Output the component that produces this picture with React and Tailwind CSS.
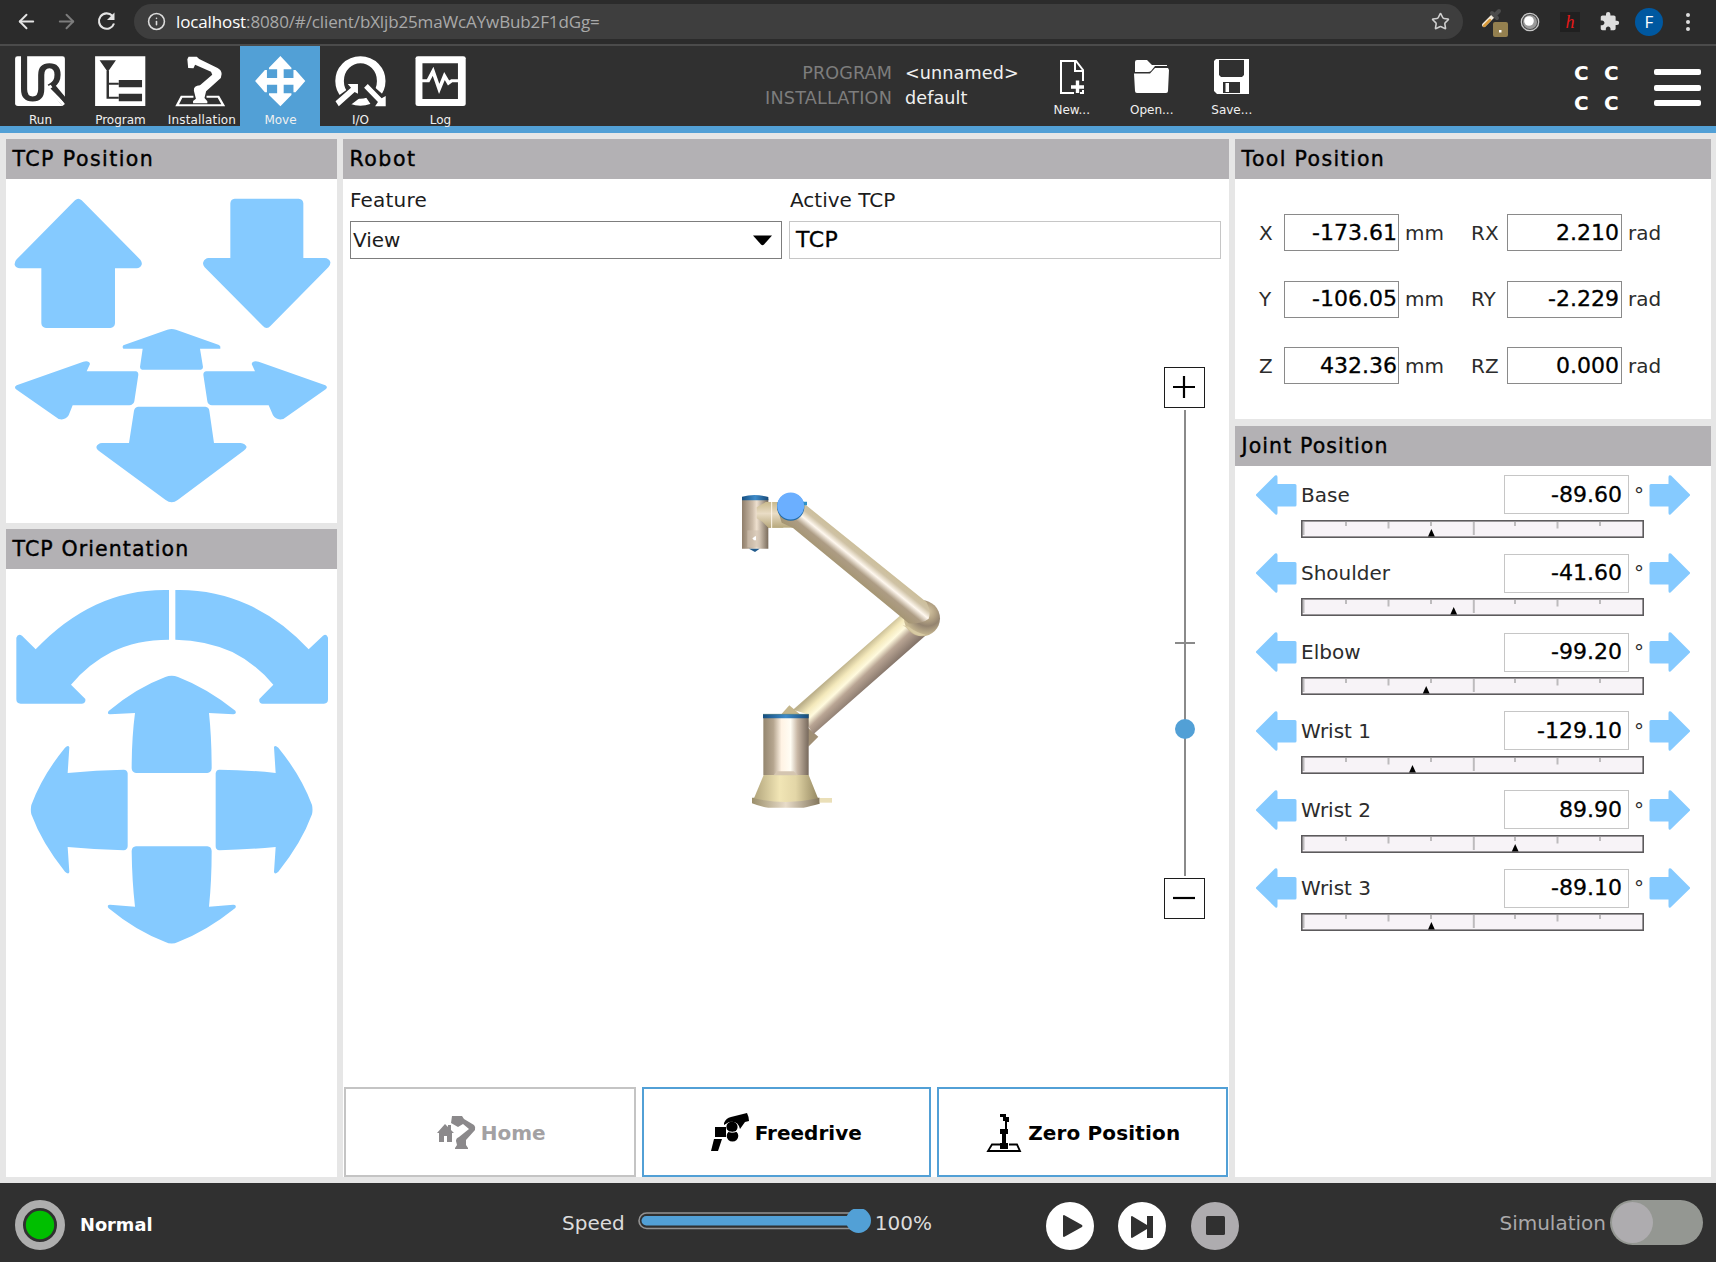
import React from "react";
import { ArrowLeft, ArrowRight, Info, Star } from "lucide-react";
import { MdExtension } from "react-icons/md";

const BLUE = "#85caff";

/* Toolbar icons: artwork units are 2.45 per pixel across and 3 per pixel down. */
function Art({ x, y, w, h, children }) {
  return (
    <svg width={w} height={h} viewBox={`${x} ${y} ${w} ${h}`} className="block shrink-0">
      <g transform="scale(0.40816 0.33333)">{children}</g>
    </svg>
  );
}

const RunIcon = () => (
  <Art x={15} y={56} w={51} h={51}>
    <path d="M43 169 H153 Q159 169 159 176 V318 H44 Q37 318 37 310 V176 Q37 169 43 169Z" fill="#fff" />
    <path d="M59 166 V268 Q59 297 80 297 Q101 297 101 268 V225 Q101 197 121 197 Q141 197 141 224 Q141 246 127 256 L161 306" fill="none" stroke="#303030" strokeWidth="15" />
    <path d="M122 270 L153 318 H163 V298 L147 276Z" fill="#303030" />
    <path d="M124 254 L159 312 L153 318 L113 262Z" fill="#fff" />
    <path d="M128 262 L160 302" stroke="#303030" strokeWidth="11" />
  </Art>
);
const ProgramIcon = () => (
  <Art x={95} y={56} w={51} h={51}>
    <path d="M233 169 H356 V318 H233Z" fill="#fff" />
    <path d="M244 181 H284 L264 216Z M291 240 H348 V262 H291Z M291 281 H348 V304 H291Z" fill="#303030" />
    <path d="M264 212 V293 H291 M264 251 H291" fill="none" stroke="#303030" strokeWidth="6" />
  </Art>
);
const InstallIcon = () => (
  <Art x={175} y={56} w={51} h={51}>
    <path d="M474 290 H445 L434 316 H547 L535 290 H506" fill="none" stroke="#fff" strokeWidth="6" />
    <path d="M462 170 H482 L488 177 L533 204 Q543 210 543 222 L541 234 L505 274 L501 294 L508 304 V310 H473 V303 L480 296 L475 272 Q474 257 490 256 L520 224 L517 215 L478 194 L474 205 L461 204 L459 178Z" fill="#fff" />
  </Art>
);
const MoveIcon = () => (
  <Art x={255} y={56} w={51} h={51}>
    <path d="M687 168 L714 203 V208 H695 V234 H719 V210 H724 L748 243 L724 277 H719 V254 H695 V280 H714 V285 L687 319 L659 285 V280 H679 V254 H654 V277 H649 L625 243 L649 210 H654 V234 H679 V208 H659 V203Z" fill="#fff" />
  </Art>
);
const IOIcon = () => (
  <Art x={335} y={56} w={51} h={51}>
    <ellipse cx="883" cy="243" rx="51" ry="64" fill="none" stroke="#fff" strokeWidth="21" />
    <path d="M815 300 L853 266 L846 246 L880 246 L888 288 L848 325Z M880 262 L900 242 L953 300 V325 H915Z" fill="#303030" />
    <path d="M822 304 L860 263 L852 252 H877 V281 L869 276 L830 319Z M892 263 L901 252 L935 295 L945 288 V319 H919 L926 306Z" fill="#fff" />
  </Art>
);
const LogIcon = () => (
  <Art x={415} y={56} w={51} h={51}>
    <rect x="1018" y="169" width="123" height="149" rx="6" fill="#fff" />
    <path d="M1035 190 H1122 V297 H1035Z" fill="#303030" />
    <path d="M1031 242 H1049 L1061 214 L1076 267 L1089 228 L1099 249 L1107 242 H1124" fill="none" stroke="#fff" strokeWidth="9" />
  </Art>
);
const NewIcon = () => (
  <svg width="26" height="36" viewBox="0 0 26 36" fill="none" stroke="#fff" strokeWidth="2">
    <path d="M15 34 H2 V2 H17 L24 11 V22 M16 2 V12 H24 M24 31 V34 H21" />
    <path d="M18.5 21.5 V34 M12 28 H25" strokeWidth="3.4" />
  </svg>
);
const OpenIcon = () => (
  <svg width="36" height="36" viewBox="0 0 36 36" fill="#fff">
    <path d="M1 3 Q1 1 3 1 H13 L18 6 H33 V7 H21 L17 12 Q16 13 14 13 H1Z" />
    <path d="M0 14.5 H16 L21 9 H34 L35 11 L34 32 Q34 34 32 34 H3 Q1 34 1 32Z" />
  </svg>
);
const SaveIcon = () => (
  <svg width="36" height="36" viewBox="0 0 36 36">
    <path d="M2 0 H35 V35 H3 L0 32 V2Z" fill="#fff" />
    <path d="M5 1 H30 V16 L28 18 H7 L5 16Z M9 23 H26 V34 H9Z" fill="#303030" />
    <path d="M11.5 24 H15 V33 H11.5Z" fill="#fff" />
  </svg>
);

const tabs = [
  ["Run", RunIcon], ["Program", ProgramIcon], ["Installation", InstallIcon],
  ["Move", MoveIcon], ["I/O", IOIcon], ["Log", LogIcon],
];

function BrowserBar() {
  return (
    <div className="flex h-[46px] items-center border-b-2 border-[#4b4b4b] bg-[#2b2b2b] pb-px">
      <ArrowLeft className="ml-[15px] size-[23px] text-[#e4e4e4]" strokeWidth={2} />
      <ArrowRight className="ml-[17px] size-[23px] text-[#7c7c7c]" strokeWidth={2} />
      <svg className="ml-[18px] size-[21px]" viewBox="0 0 21 21" fill="none" stroke="#e4e4e4" strokeWidth="2.1">
        <path d="M16.3 4.8 A7.7 7.7 0 1 0 18 12.5" />
        <path d="M18.5 1.5 V9 H11Z" fill="#e4e4e4" stroke="none" />
      </svg>
      <div className="ml-[17px] flex h-[35px] w-[1329px] items-center rounded-full bg-[#3e3e3e] pr-[13px] pl-[13px]">
        <Info className="size-[19px] text-[#dcdcdc]" strokeWidth={2} />
        <span className="ml-[10px] font-['Open_Sans'] text-[17px] leading-none tracking-[-0.13px] whitespace-nowrap text-[#a9a9a9]">
          <span className="text-white">localhost</span>:8080/#/client/bXljb25maWcAYwBub2F1dGg=
        </span>
        <Star className="ml-auto size-[19px] text-[#cfcfcf]" strokeWidth={2} />
      </div>
      <svg className="ml-[18px] h-[30px] w-[28px]" viewBox="0 0 28 30">
        <path d="M3 18 L13 8" stroke="#f2e9d8" strokeWidth="4" strokeLinecap="round" />
        <path d="M3 19 L9 13" stroke="#d99a3a" strokeWidth="2.5" strokeLinecap="round" />
        <path d="M11 6 L16 11 M14 8 L18 4" stroke="#4c4c4c" strokeWidth="4" strokeLinecap="round" />
        <rect x="12" y="15" width="15" height="15" rx="2" fill="#94804f" />
        <rect x="18" y="23" width="2.5" height="2.5" fill="#fff" />
      </svg>
      <svg className="ml-[11px] size-[20px]" viewBox="0 0 20 20">
        <circle cx="10" cy="10" r="8.7" fill="#4a4a4a" stroke="#c8c8c8" strokeWidth="1.3" />
        <circle cx="10" cy="10" r="7" fill="#9a9a9a" />
        <circle cx="9" cy="9" r="4.8" fill="#fff" />
      </svg>
      <div className="ml-[20px] flex size-[20px] items-center justify-center bg-[#202020] font-['Liberation_Serif'] text-[18px] leading-none text-[#e81818] italic">h</div>
      <MdExtension className="ml-[19px] size-[21px] text-[#dedede]" />
      <div className="ml-[15px] flex size-7 items-center justify-center rounded-full bg-[#0058a0] font-['Open_Sans'] text-[17px] leading-none text-white">F</div>
      <div className="ml-[23px] flex flex-col gap-[3px]">
        {[0, 1, 2].map((i) => <div key={i} className="size-1 rounded-full bg-[#dedede]" />)}
      </div>
    </div>
  );
}

function FileButton({ icon: Icon, label }) {
  return (
    <div className="flex w-[80px] flex-col items-center pt-[13px] text-[12px] leading-none">
      <Icon />
      <span className="mt-[9px]">{label}</span>
    </div>
  );
}

function Header() {
  return (
    <div className="flex h-[87px] border-b-[7px] border-[#52a0d6] bg-[#303030] text-[#f0f0f0]">
      {tabs.map(([name, Icon]) => (
        <div key={name} className={"flex w-[80px] flex-col items-center pt-[10px] text-[12px] leading-none " + (name === "Move" ? "bg-[#52a0d6]" : "")}>
          <Icon />
          <span className={"mt-[7px] whitespace-nowrap " + (name === "Installation" ? "pl-[4px] tracking-[0.15px]" : "pl-[1px]")}>{name}</span>
        </div>
      ))}
      <div className="ml-[284px] grid h-[52px] grid-cols-[128px_auto] content-start gap-x-[13px] pt-[15px] text-[17.6px] leading-[25px] whitespace-nowrap">
        <span className="text-right tracking-[0.1px] text-[#7d7d7d]">PROGRAM</span><span className="tracking-[0.1px]">&lt;unnamed&gt;</span>
        <span className="text-right tracking-[0.2px] text-[#7d7d7d]">INSTALLATION</span><span className="tracking-[0.1px]">default</span>
      </div>
      <div className="ml-[13px] flex">
        <FileButton icon={NewIcon} label="New..." />
        <FileButton icon={OpenIcon} label="Open..." />
        <FileButton icon={SaveIcon} label="Save..." />
      </div>
      <div className="ml-auto grid h-[60px] grid-cols-[30px_30px] pt-[12px] text-[20px] leading-[30px] font-bold text-white">
        <span>C</span><span>C</span><span>C</span><span>C</span>
      </div>
      <div className="mt-[23px] mr-[15px] ml-[20px] flex flex-col gap-[9.500px]">
        {[0, 1, 2].map((i) => <div key={i} className="h-[6px] w-[47px] rounded-[2px] bg-white" />)}
      </div>
    </div>
  );
}

function Panel({ title, className, tracking = "tracking-[1.1px]", children }) {
  return (
    <section className={"flex flex-col bg-white " + className}>
      <h2 className={"h-[40px] shrink-0 bg-[#b3b1b4] pl-[6.500px] text-[20.5px] leading-[41px] whitespace-nowrap text-black [-webkit-text-stroke:0.4px_black] " + tracking}>{title}</h2>
      {children}
    </section>
  );
}

const PositionArrows = () => (
  <svg width="331" height="344" viewBox="18 147 993 1032" fill={BLUE} className="block">
    <path d="M225 211 Q235 201 245 211 L421 389 Q427 397 425 404 Q421 414 410 415 H345 V580 Q344 593 331 594 H138 Q125 593 124 580 V415 H60 Q47 414 44 404 Q43 395 50 388Z" />
    <path d="M704 206 H896 Q909 207 910 220 V384 H974 Q987 385 991 396 Q992 404 985 412 L812 587 Q800 601 788 587 L614 412 Q607 404 610 396 Q614 385 626 384 H691 V220 Q692 207 704 206Z" />
    <path d="M502 599 Q515 595 528 599 L657 645 Q663 648 661 656 H600 L609 711 Q609 718 603 719 H426 Q420 718 420 711 L428 656 H370 Q365 651 370 646Z" />
    <path d="M50 766 L250 695 Q268 691 270 702 L260 724 H407 Q415 725 415 734 L403 814 Q400 825 388 826 H218 L206 856 Q196 872 176 867 L48 778 Q41 771 50 766Z" />
    <path d="M976 766 L776 695 Q757 691 755 702 L765 724 H619 Q610 725 610 734 L622 814 Q624 825 636 826 H806 L819 856 Q829 872 850 867 L977 778 Q985 771 976 766Z" />
    <path d="M414 830 H616 Q627 831 628 842 L642 939 H722 Q736 941 740 951 Q738 957 731 962 L533 1110 Q515 1124 497 1110 L296 962 Q289 957 289 951 Q293 940 306 939 H387 L402 842 Q404 831 414 830Z" />
  </svg>
);

const OrientationArrows = () => (
  <svg width="331" height="390" viewBox="18 147 993 1170" fill={BLUE} className="block">
    <path d="M507 210 V359 Q410 359 335 396 Q266 431 213 494 L256 537 Q258 550 246 551 H62 Q49 551 49 538 V353 Q54 340 66 347 L107 388 Q190 300 288 254 Q390 207 507 210Z" />
    <path d="M526 210 V359 Q620 361 697 396 Q767 431 820 494 L778 537 Q776 550 788 551 H972 Q984 551 984 538 V353 Q980 340 969 347 L926 388 Q845 300 745 254 Q640 207 526 210Z" />
    <path d="M496 471 Q515 464 534 471 Q620 504 706 572 Q711 582 700 583 L627 579 Q635 655 635 745 Q634 758 622 759 H408 Q396 758 395 745 Q395 655 405 579 L330 583 Q320 582 326 573 Q408 504 496 471Z" />
    <path d="M496 1266 Q515 1275 534 1266 Q620 1233 706 1164 Q711 1155 700 1154 L627 1160 Q635 1082 635 993 Q634 980 622 979 H408 Q396 980 395 993 Q396 1082 405 1160 L330 1154 Q319 1155 326 1165 Q408 1233 496 1266Z" />
    <path d="M94 855 Q91 869 94 883 Q126 970 195 1055 Q206 1065 208 1056 L203 981 Q290 989 371 991 Q382 990 383 979 V760 Q382 750 371 749 Q290 750 203 759 L208 682 Q205 673 195 683 Q126 768 94 855Z" />
    <path d="M936 855 Q939 869 936 883 Q904 970 835 1055 Q824 1065 822 1056 L827 981 Q740 989 658 991 Q647 990 647 979 V760 Q648 750 658 749 Q740 750 827 759 L822 682 Q824 673 835 683 Q904 768 936 855Z" />
  </svg>
);

function RobotArm() {
  return (
    <svg width="260" height="350" viewBox="0 0 780 1050" className="block">
      <defs>
        <linearGradient id="tube">
          <stop offset="0" stopColor="#94866f" /><stop offset=".22" stopColor="#b5a58f" /><stop offset=".4" stopColor="#fff3e4" />
          <stop offset=".6" stopColor="#fffdf4" /><stop offset=".75" stopColor="#c9b8a6" /><stop offset="1" stopColor="#77695c" />
        </linearGradient>
        <linearGradient id="wrist">
          <stop offset="0" stopColor="#8f7e6b" /><stop offset=".4" stopColor="#cdbdaa" /><stop offset=".56" stopColor="#eee0cf" /><stop offset="1" stopColor="#7a6c5c" />
        </linearGradient>
        <linearGradient id="cap"><stop offset="0" stopColor="#154e80" /><stop offset=".5" stopColor="#3e8bc9" /><stop offset="1" stopColor="#174a79" /></linearGradient>
        <linearGradient id="upper" gradientUnits="userSpaceOnUse" x1="449" y1="238" x2="381" y2="322">
          <stop offset="0" stopColor="#c9bb91" /><stop offset=".3" stopColor="#cfc2a5" /><stop offset=".47" stopColor="#fff8ef" /><stop offset=".66" stopColor="#ad9c84" /><stop offset="1" stopColor="#a3946f" />
        </linearGradient>
        <linearGradient id="lower" gradientUnits="userSpaceOnUse" x1="376" y1="579" x2="446" y2="653">
          <stop offset="0" stopColor="#bdb18b" /><stop offset=".25" stopColor="#f4e9bb" /><stop offset=".45" stopColor="#fffade" /><stop offset=".65" stopColor="#b9a594" /><stop offset="1" stopColor="#85756a" />
        </linearGradient>
        <linearGradient id="skirt"><stop offset="0" stopColor="#b2a57c" /><stop offset=".4" stopColor="#f1e5b5" /><stop offset=".65" stopColor="#e3d6a7" /><stop offset="1" stopColor="#968962" /></linearGradient>
        <linearGradient id="flange"><stop offset="0" stopColor="#9b8f6b" /><stop offset=".5" stopColor="#e8dcc9" /><stop offset="1" stopColor="#83765c" /></linearGradient>
        <linearGradient id="joint" x2="0" y2="1"><stop offset="0" stopColor="#c9b98c" /><stop offset=".45" stopColor="#e9dcc5" /><stop offset="1" stopColor="#b7a87c" /></linearGradient>
        <radialGradient id="elbow" gradientUnits="userSpaceOnUse" cx="622" cy="425" r="72"><stop offset="0" stopColor="#d8c9a6" /><stop offset=".35" stopColor="#b3a284" /><stop offset=".6" stopColor="#948470" /><stop offset="1" stopColor="#c9ba93" /></radialGradient>
      </defs>
      <path d="M180 737 L208 706 L245 737Z" fill="#c4b68c" />
      <path d="M262 772 L295 800 L265 830Z" fill="#a08f75" />
      <path d="M219 719 L545 433 L622 492 L280 793 L262 765 V733Z" fill="url(#lower)" />
      <circle cx="606" cy="445" r="54" fill="url(#elbow)" />
      <path d="M548 465 L566 470 Q590 488 617 494 L600 498 L583 492Z" fill="#d8caa3" />
      <path d="M110 112 L137 96 H190 V173 H145 L128 156 H110Z" fill="url(#joint)" />
      <path d="M155 96 H220 V173 H155Z" fill="url(#joint)" />
      <path d="M155 96 V174" stroke="#fff8ed" strokeWidth="3" />
      <path d="M172 115 L255 103 L620 397 Q634 424 626 446 Q606 462 566 460 L219 174 L185 158Z" fill="url(#upper)" />
      <path d="M235 95 H261 V106 H250Z" fill="#2e92ca" />
      <path d="M66 86 H145 V236 H66Z" fill="url(#wrist)" />
      <path d="M110 112 L137 96 H153 V173 H145 L128 156 L110 145Z" fill="url(#joint)" />
      <path d="M66 80 Q105 70 145 81 V91 H66Z" fill="url(#cap)" />
      <path d="M82 181 H119 V232 H82Z" fill="#d1c1b0" opacity=".6" />
      <path d="M97 205 L104 200 V199 H108 V211 H102Z" fill="#fff" />
      <path d="M87 236 H119 L105 246Z" fill="#235b8c" />
      <circle cx="212" cy="111" r="41" fill="#226aa5" />
      <circle cx="212" cy="108" r="40.5" fill="#6bafff" />
      <path d="M130 733 H266 V916 H130Z" fill="url(#tube)" />
      <path d="M129 732 H266 V745 H129Z" fill="url(#cap)" />
      <path d="M129 733 H266" stroke="#5d8a8a" strokeWidth="2" />
      <path d="M96 983 H299 V1001 Q270 1009 251 1013 H145 Q120 1010 96 1000Z" fill="url(#flange)" />
      <path d="M131 915 H266 L294 985 Q198 1007 102 985Z" fill="url(#skirt)" />
      <path d="M161 916 L171 904 H221 L235 916Z" fill="#d4c5b0" />
      <path d="M299 984 H336 V998 H299Z" fill="#eadfb8" />
    </svg>
  );
}

function ZoomSlider() {
  return (
    <div className="flex w-[41px] flex-col items-center">
      <div className="flex h-[41px] w-[41px] items-center justify-center border-[1.500px] border-[#1c1c1c]">
        <svg width="23" height="23" viewBox="0 0 23 23" stroke="#000" strokeWidth="2.2"><path d="M0 11 H22 M11 0 V22" /></svg>
      </div>
      <div className="relative mt-[2px] mb-[2px] h-[466px] w-[2px] bg-[#8a8a8a]">
        <div className="absolute top-[232px] left-[-9px] h-[2px] w-[20px] bg-[#8a8a8a]" />
        <div className="absolute top-[309px] left-[-9px] size-[20px] rounded-full bg-[#52a0d6]" />
      </div>
      <div className="flex h-[41px] w-[41px] items-center justify-center border-[1.500px] border-[#1c1c1c]">
        <svg width="23" height="23" viewBox="0 0 23 23" stroke="#000" strokeWidth="2.2"><path d="M0 11 H22" /></svg>
      </div>
    </div>
  );
}

const HomeIcon = () => (
  <svg width="39" height="35" viewBox="0 0 39 35" fill="#8b898b">
    <path d="M0 18 L8 9 L11 12 V10 H14 V15 L17 18 H15 V27 H10 V21 H7 V27 H2 V18Z" />
    <path d="M15 1 H25 L27 4 L37 10 Q39 12 38 15 L29 25 V30 L31 33 V34 H18 V33 L20 30 L19 26 Q19 23 22 22 L32 14 L26 9 L21 12 L14 8Z" />
  </svg>
);
const FreedriveIcon = () => (
  <svg width="39" height="39" viewBox="0 0 39 39" fill="#000">
    <path d="M13 10 Q15 5 20 4 L36 0 Q38 4 38 8 L34 9 L29 16 Q27 7 18 9 L13 12Z M4 14 H15 V24 H4Z M3 26 H11 L7 38 H0Z" />
    <circle cx="21" cy="14" r="5.6" />
    <ellipse cx="21.5" cy="23" rx="5.8" ry="5.6" />
    <path d="M16 17.5 Q21 21 27 17.5" stroke="#fff" strokeWidth="1" fill="none" />
  </svg>
);
const ZeroIcon = () => (
  <svg width="36" height="40" viewBox="0 0 36 40">
    <path d="M14 31.5 H6 L2 38 H34 L31 31.5 H23" fill="none" stroke="#000" strokeWidth="1.8" />
    <path d="M14 1 H20 V4 H23 V9 H21 V16 H22 V21 H20 V30 H22 V36 H14 V30 H16 V21 H14 V16 H19 V8 H17 V4 H14Z" fill="#000" />
  </svg>
);

function BigButton({ icon: Icon, label, disabled, className }) {
  return (
    <div className={"flex flex-1 items-center justify-center border-[2.5px] pt-px text-[20px] font-bold " + className + (disabled ? " border-[#c4c4c4] text-[#a3a1a3]" : " border-[#52a0d6] text-black")}>
      <Icon />
      <span>{label}</span>
    </div>
  );
}

const pose = [
  ["X", "-173.61", "RX", "2.210"],
  ["Y", "-106.05", "RY", "-2.229"],
  ["Z", "432.36", "RZ", "0.000"],
];

const joints = [
  ["Base", "-89.60", 130.4], ["Shoulder", "-41.60", 152.7], ["Elbow", "-99.20", 125.2],
  ["Wrist 1", "-129.10", 111.5], ["Wrist 2", "89.90", 214.2], ["Wrist 3", "-89.10", 130.4],
];

const ticks = [[2.5, 15], [45, 6], [87.5, 8.5], [130, 6], [172.8, 15], [214, 6], [256.5, 8.5], [299, 6]];

const Value = ({ className, children }) => (
  <div className={"flex items-center justify-end bg-white text-[22px] leading-none text-black [-webkit-text-stroke:0.3px_black] " + className}>{children}</div>
);

const JointArrow = ({ flip }) => (
  <svg width="41" height="40" viewBox="0 0 41 40" fill={BLUE} className={flip ? "-scale-x-100" : ""}>
    <path d="M0 19.5 L19 0.5 Q21.5 -0.5 21.5 2 V9 H39 Q40.5 9 40.5 10.5 V30 Q40.5 31.5 39 31.5 H21.5 V38 Q21.5 40.5 19.5 39.5 L0.5 21 Q-0.5 20 0 19.5Z" />
  </svg>
);

function JointRow({ name, value, pos }) {
  return (
    <div className="h-[78.8px]">
      <div className="flex h-[40px] items-center text-[20px] text-[#2c2c2c]">
        <JointArrow />
        <span className="ml-[4px] w-[203px]">{name}</span>
        <Value className="h-[39px] w-[125px] border-[1.500px] border-[#c6c6c6] pr-[6px]">{value}</Value>
        <span className="w-[20px] pl-[5px]">°</span>
        <JointArrow flip />
      </div>
      <svg className="mt-[5px] ml-[45px] block" width="343" height="18" viewBox="0 0 343 18">
        <rect x="1" y="1" width="341" height="16" fill="#f7f3f7" />
        {ticks.map(([x, h]) => <path key={x} d={`M${x} 2 V${h}`} stroke="#bdbbbd" strokeWidth="2" />)}
        <rect x=".8" y=".8" width="341.4" height="16.4" fill="none" stroke="#5c5a5c" strokeWidth="1.6" />
        <path d={`M${pos - 3.4} 16.5 L${pos} 9 L${pos + 3.4} 16.5Z`} fill="#000" />
      </svg>
    </div>
  );
}

function Footer() {
  return (
    <div className="flex h-[79px] items-center bg-[#303030] text-[20px] leading-none text-[#dcdcdc]">
      <svg className="mt-[5px] ml-[15px]" width="50" height="50" viewBox="0 0 50 50">
        <circle cx="25" cy="25" r="21" fill="none" stroke="#aeaeae" strokeWidth="8" />
        <circle cx="25" cy="25" r="14.2" fill="#00bf00" />
      </svg>
      <span className="mt-[4px] ml-[15px] w-[482px] text-[17.800px] font-bold text-white">Normal</span>
      <span>Speed</span>
      <svg className="ml-[13px]" width="235" height="28" viewBox="0 0 235 28">
        <rect x="1" y="4" width="222" height="15.5" rx="7.7" fill="none" stroke="#929292" strokeWidth="1.6" />
        <rect x="3.500" y="7" width="218" height="9.5" rx="4.7" fill="#52a0d6" />
        <circle cx="220.5" cy="11.5" r="12.5" fill="#52a0d6" />
      </svg>
      <span className="ml-[2px] w-[171px]">100%</span>
      <div className="mt-[7px] flex gap-[24.500px]">
        <svg width="48" height="48" viewBox="0 0 48 48"><circle cx="24" cy="24" r="24" fill="#fff" /><path d="M17 14 Q17 13 18 13 L36 23 Q37 24 36 25 L18 35 Q17 35 17 34Z" fill="#303030" /></svg>
        <svg width="48" height="48" viewBox="0 0 48 48"><circle cx="24" cy="24" r="24" fill="#fff" /><path d="M13 15 Q13 14 14 14 L29 23 V14 H35 V36 H29 V27 L14 36 Q13 36 13 35Z" fill="#303030" /></svg>
        <svg width="48" height="48" viewBox="0 0 48 48"><circle cx="24" cy="24" r="24" fill="#aeacaf" /><rect x="15" y="14" width="19" height="19" rx="1.5" fill="#303030" /></svg>
      </div>
      <span className="mt-px ml-auto text-[#aaa9ab]">Simulation</span>
      <div className="mr-[13px] ml-[4px] flex h-[45px] w-[93px] items-center rounded-full bg-[#949792] pl-[2px]">
        <div className="size-[41px] rounded-full bg-[#aeacaf]" />
      </div>
    </div>
  );
}

export default function App() {
  return (
    <div className="flex h-[1262px] w-[1716px] flex-col overflow-hidden bg-[#e6e6e6] font-['DejaVu_Sans',sans-serif]">
      <BrowserBar />
      <Header />
      <div className="flex flex-1 gap-[6px] px-[6px] py-[6px] pr-[5px]">
        <div className="flex w-[331px] flex-col gap-[6px]">
          <Panel title="TCP Position" tracking="tracking-[1.45px]" className="h-[384px]"><PositionArrows /></Panel>
          <Panel title="TCP Orientation" className="flex-1"><OrientationArrows /></Panel>
        </div>
        <Panel title="Robot" tracking="tracking-[1.5px]" className="w-[886px]">
          <div className="flex gap-[7px] px-[7px] pt-[8px] text-[20px] leading-[26px] text-[#1c1c1c]">
            <div className="w-[432px]">
              <div className="tracking-[0.2px]">Feature</div>
              <div className="mt-[8px] flex h-[38px] items-center justify-between border-[1.500px] border-[#7d7d7d] pr-[8px] pl-[2px]">
                <span>View</span>
                <svg width="21" height="11" viewBox="0 0 21 11"><path d="M1 0.5 H20 L12 9.5 Q10.5 11 9 9.5Z" /></svg>
              </div>
            </div>
            <div className="w-[432px]">
              <div className="pl-px">Active TCP</div>
              <div className="mt-[8px] flex h-[38px] items-center border-[1.500px] border-[#c6c6c6] pl-[6px] text-[22px] tracking-[0.5px] text-black [-webkit-text-stroke:0.3px_black]">TCP</div>
            </div>
          </div>
          <div className="flex flex-1 justify-between pr-[24px] pl-[377px]">
            <div className="pt-[211px]"><RobotArm /></div>
            <div className="pt-[108px]"><ZoomSlider /></div>
          </div>
          <div className="flex h-[90px] gap-[6.500px] pr-[1.500px] pl-[1px]">
            <BigButton icon={HomeIcon} label="Home" className="gap-[5px] pl-[3px]" disabled />
            <BigButton icon={FreedriveIcon} label="Freedrive" className="gap-[5px]" />
            <BigButton icon={ZeroIcon} label="Zero Position" className="gap-[6px] pl-[2px] tracking-[0.15px]" />
          </div>
        </Panel>
        <div className="flex w-[476px] flex-col gap-[7px]">
          <Panel title="Tool Position" tracking="tracking-[1.35px]" className="h-[280px]">
            <div className="flex flex-col gap-[29.500px] pt-[35px] pl-[24px]">
              {pose.map(([a, av, r, rv]) => (
                <div key={a} className="flex h-[37px] items-center text-[20px] text-[#2c2c2c]">
                  <span className="w-[25px]">{a}</span>
                  <Value className="h-[37px] w-[115px] border-[1.500px] border-[#8a8a8a] pr-px">{av}</Value>
                  <span className="w-[73px] pl-[6px]">mm</span>
                  <span className="w-[35px] -translate-x-px">{r}</span>
                  <Value className="h-[37px] w-[115px] border-[1.500px] border-[#8a8a8a] pr-[2px]">{rv}</Value>
                  <span className="pl-[6px]">rad</span>
                </div>
              ))}
            </div>
          </Panel>
          <Panel title="Joint Position" className="flex-1">
            <div className="pt-[8.500px] pl-[21px]">
              {joints.map(([n, v, p]) => <JointRow key={n} name={n} value={v} pos={p} />)}
            </div>
          </Panel>
        </div>
      </div>
      <Footer />
    </div>
  );
}
